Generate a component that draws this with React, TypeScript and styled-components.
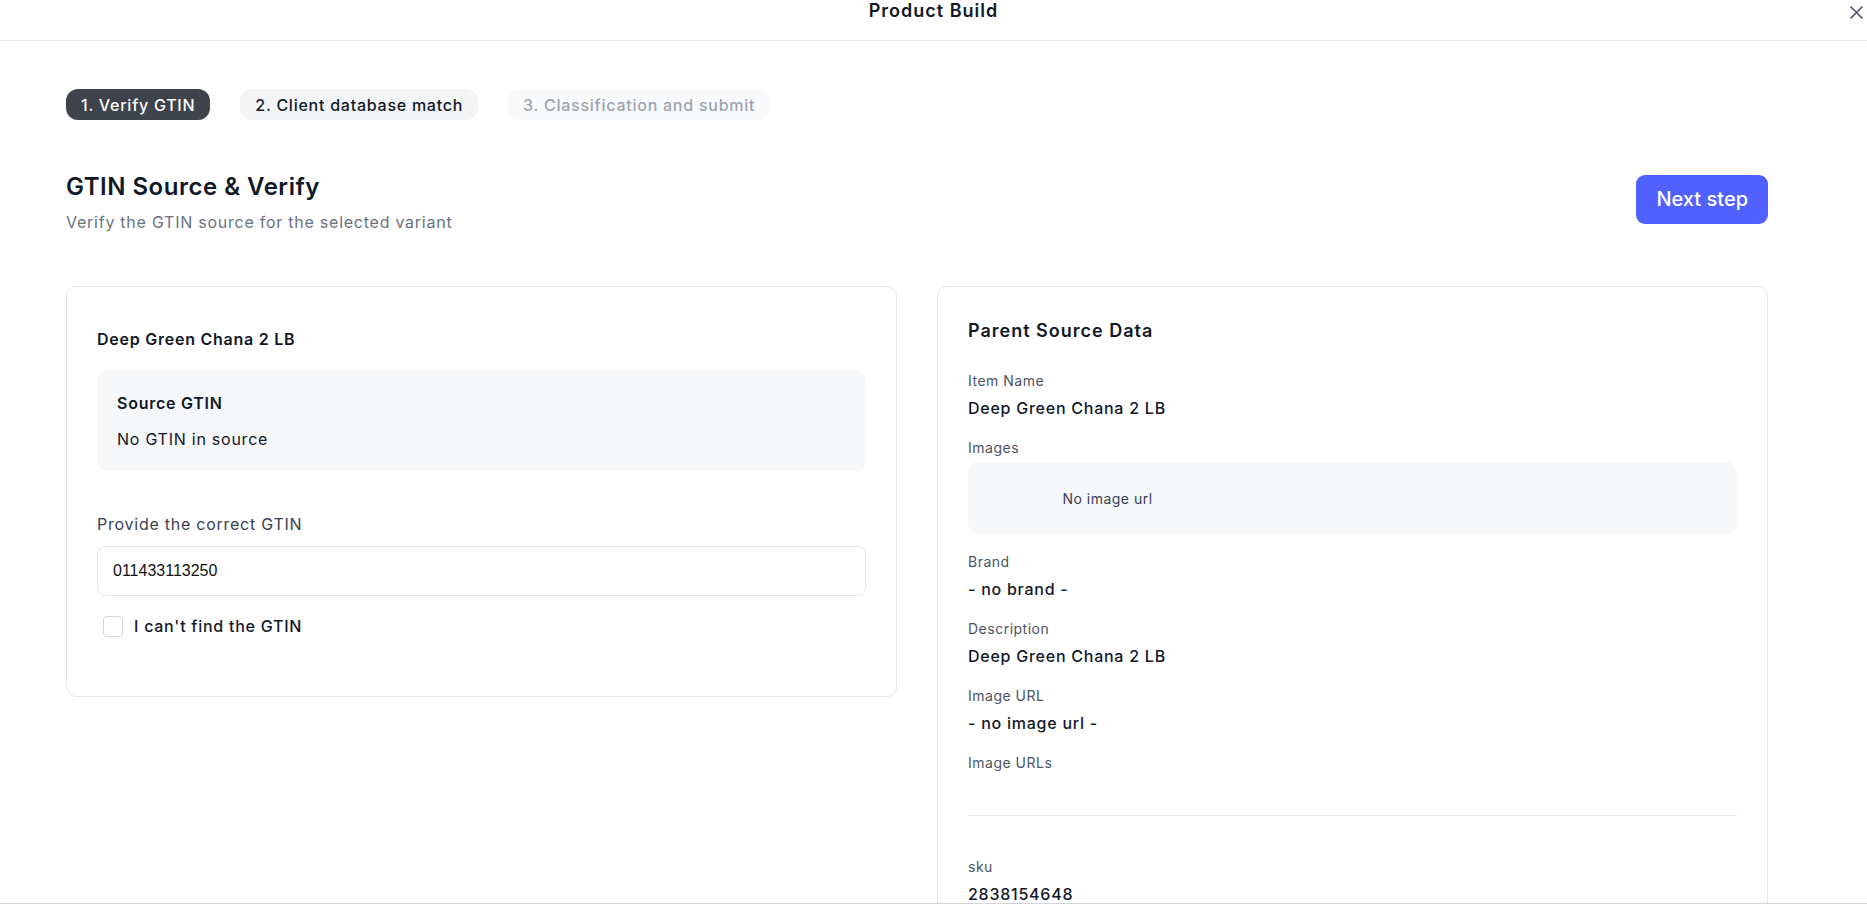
import styled, { createGlobalStyle } from "styled-components";

const Global = createGlobalStyle`
  html, body {
    margin: 0;
    padding: 0;
    background: #fff;
  }
  body {
    font-family: Inter, "Noto Sans", sans-serif;
    color: #111827;
    letter-spacing: 0.75px;
  }
  * {
    box-sizing: border-box;
  }
`;

const Page = styled.div`
  height: 905px;
  display: flex;
  flex-direction: column;
  overflow: hidden;
`;

const Header = styled.header`
  position: relative;
  height: 41px;
  flex-shrink: 0;
  border-bottom: 1px solid #e5e7eb;
  display: flex;
  justify-content: center;
`;

const Title = styled.h1`
  margin: 0;
  font-size: 18px;
  line-height: 22px;
  font-weight: 600;
  letter-spacing: 1px;
  color: #111827;
`;

const Close = styled.button`
  position: absolute;
  right: 2px;
  top: 5px;
  width: 16px;
  height: 16px;
  padding: 0;
  border: 0;
  background: none;
  color: #4b5563;
  display: flex;
`;

const Body = styled.main`
  flex: 1;
  overflow: hidden;
  padding: 48px 0 0 66px;
`;

const Inner = styled.div`
  width: 1702px;
`;

const Steps = styled.ol`
  display: flex;
  gap: 30px;
  margin: 0;
  padding: 0;
  list-style: none;
`;

const Step = styled.li<{ $state: "active" | "next" | "todo" }>`
  height: 31px;
  padding: 0 15px;
  border-radius: 12px;
  display: flex;
  align-items: center;
  font-size: 16px;
  font-weight: 500;
  background: ${(p) =>
    p.$state === "active" ? "#3e434c" : p.$state === "next" ? "#f3f4f6" : "#f9fafb"};
  color: ${(p) =>
    p.$state === "active" ? "#fff" : p.$state === "next" ? "#111827" : "#9ca3af"};
`;

const TopRow = styled.div`
  margin-top: 51px;
  display: flex;
  align-items: center;
  justify-content: space-between;
`;

const Heading = styled.h2`
  margin: 0;
  font-size: 24px;
  line-height: 32px;
  font-weight: 600;
  letter-spacing: 0.5px;
  color: #111827;
`;

const Sub = styled.p`
  margin: 7px 0 0;
  font-size: 16px;
  line-height: 24px;
  color: #6b7280;
`;

const NextButton = styled.button`
  height: 49px;
  padding: 0 20px;
  margin-top: -7px;
  border: 0;
  border-radius: 9px;
  background: #5061ff;
  color: #fff;
  font-family: Inter, sans-serif;
  font-size: 20px;
  font-weight: 500;
  letter-spacing: 0;
`;

const Columns = styled.div`
  margin-top: 52px;
  display: grid;
  grid-template-columns: 1fr 1fr;
  gap: 40px;
  align-items: start;
`;

const Card = styled.section<{ $pad: string }>`
  border: 1px solid #e5e7eb;
  border-radius: 10px;
  padding: ${(p) => p.$pad};
  background: #fff;
`;

const CardTitle = styled.h3<{ $size: number }>`
  margin: 0;
  font-size: ${(p) => p.$size}px;
  line-height: ${(p) => (p.$size > 16 ? 28 : 24)}px;
  letter-spacing: ${(p) => (p.$size > 16 ? 1 : 0.75)}px;
  font-weight: 600;
  color: #111827;
`;

const GreyBox = styled.div`
  margin-top: 20px;
  padding: 20px;
  border-radius: 10px;
  background: #f6f7f9;
  display: flex;
  flex-direction: column;
  gap: 12px;
  font-size: 16px;
  line-height: 24px;
`;

const BoxTitle = styled.div`
  font-weight: 600;
`;

const FieldLabel = styled.label`
  display: block;
  margin-top: 41px;
  font-size: 16px;
  line-height: 24px;
  color: #374151;
`;

const Input = styled.input`
  display: block;
  width: 100%;
  height: 50px;
  margin-top: 10px;
  padding: 0 15px;
  border: 1px solid #e5e7eb;
  border-radius: 8px;
  font-family: "Liberation Sans", Arial, sans-serif;
  font-size: 16px;
  letter-spacing: 0;
  color: #111;
  outline: none;
`;

const CheckRow = styled.label`
  margin: 18px 0 0 6px;
  display: flex;
  align-items: center;
  gap: 11px;
  font-size: 16px;
  line-height: 24px;
  font-weight: 500;
  color: #111827;
`;

const Box = styled.span`
  width: 20px;
  height: 21px;
  border: 1.5px solid #d1d5db;
  border-radius: 4px;
  background: #fff;
`;

const Fields = styled.dl`
  margin: 26px 0 0;
  display: flex;
  flex-direction: column;
  gap: 18px;
`;

const Field = styled.div``;

const Label = styled.dt`
  font-size: 14px;
  line-height: 20px;
  letter-spacing: 0.5px;
  color: #4b5563;
`;

const Value = styled.dd`
  margin: 5px 0 0;
  min-height: 24px;
  font-size: 16px;
  line-height: 24px;
  font-weight: 500;
  color: #111827;
`;

const ImageBox = styled.dd`
  margin: 4px 0 0;
  height: 72px;
  border-radius: 10px;
  background: #f6f7f9;
  display: flex;
  align-items: center;
`;

const NoImage = styled.span`
  width: 279px;
  text-align: center;
  font-size: 14px;
  letter-spacing: 0.5px;
  color: #374151;
`;

const Divider = styled.hr`
  margin: -5px 0 23px;
  border: 0;
  border-top: 1px solid #e5e7eb;
`;

const Footer = styled.div`
  height: 2px;
  flex-shrink: 0;
  border-top: 1px solid #d1d5db;
`;

const data = [
  { label: "Item Name", value: "Deep Green Chana 2 LB" },
  { label: "Images", image: true },
  { label: "Brand", value: "- no brand -" },
  { label: "Description", value: "Deep Green Chana 2 LB" },
  { label: "Image URL", value: "- no image url -" },
  { label: "Image URLs", value: "" },
  { divider: true },
  { label: "sku", value: "2838154648" },
];

const App = () => {
  return (
    <Page>
      <Global />
      <Header>
        <Title>Product Build</Title>
        <Close aria-label="Close">
          <svg width="15" height="15" viewBox="0 0 15 15" fill="none">
            <path d="M1.5 1.5 L13.5 13.5 M13.5 1.5 L1.5 13.5" stroke="currentColor" strokeWidth="1.6" />
          </svg>
        </Close>
      </Header>
      <Body>
        <Inner>
          <Steps>
            <Step $state="active">1. Verify GTIN</Step>
            <Step $state="next">2. Client database match</Step>
            <Step $state="todo">3. Classification and submit</Step>
          </Steps>

          <TopRow>
            <div>
              <Heading>GTIN Source &amp; Verify</Heading>
              <Sub>Verify the GTIN source for the selected variant</Sub>
            </div>
            <NextButton>Next step</NextButton>
          </TopRow>

          <Columns>
            <Card $pad="40px 30px 58px">
              <CardTitle $size={16}>Deep Green Chana 2 LB</CardTitle>
              <GreyBox>
                <BoxTitle>Source GTIN</BoxTitle>
                <div>No GTIN in source</div>
              </GreyBox>
              <FieldLabel htmlFor="gtin">Provide the correct GTIN</FieldLabel>
              <Input id="gtin" defaultValue="011433113250" />
              <CheckRow>
                <Box />
                I can't find the GTIN
              </CheckRow>
            </Card>

            <Card $pad="30px 30px 40px">
              <CardTitle $size={18}>Parent Source Data</CardTitle>
              <Fields>
                {data.map((item, index) => {
                  if (item.divider) return <Divider key={index} />;
                  return (
                    <Field key={index}>
                      <Label>{item.label}</Label>
                      {item.image ? (
                        <ImageBox>
                          <NoImage>No image url</NoImage>
                        </ImageBox>
                      ) : (
                        <Value>{item.value}</Value>
                      )}
                    </Field>
                  );
                })}
              </Fields>
            </Card>
          </Columns>
        </Inner>
      </Body>
      <Footer />
    </Page>
  );
};

export default App;
